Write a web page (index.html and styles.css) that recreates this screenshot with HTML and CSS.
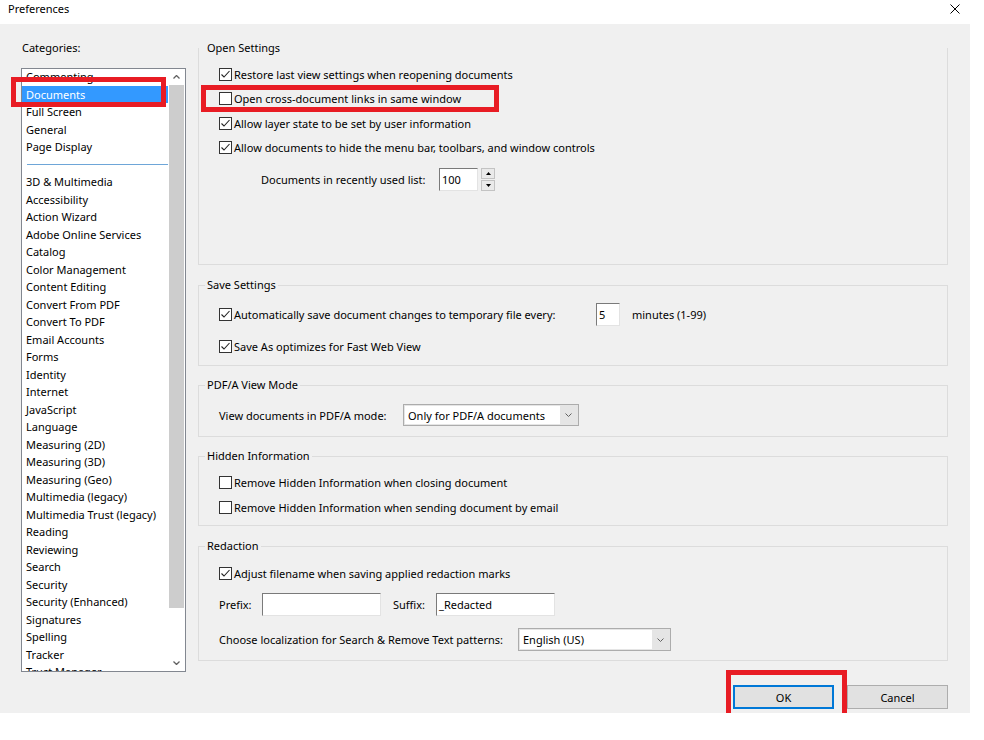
FILE: index.html
```html
<!DOCTYPE html>
<html lang="en">
<head>
    <meta charset="UTF-8">
    <title>Preferences</title>
    <link rel="stylesheet" href="styles.css">
</head>
<body>
<div class="window">
    <div class="titlebar">
        <span class="title">Preferences</span>
        <svg class="close" width="10" height="10" viewBox="0 0 10 10"><path d="M0.5 0.5 L9.5 9.5 M9.5 0.5 L0.5 9.5" stroke="#000" stroke-width="1"/></svg>
    </div>
    <div class="dialog">
        <div class="categories">
            <div class="cat-label">Categories:</div>
            <div class="listbox">
                <ul class="cat-list">
                    <li>Commenting</li>
                    <li class="selected">Documents</li>
                    <li>Full Screen</li>
                    <li>General</li>
                    <li>Page Display</li>
                    <li class="sep"></li>
                    <li>3D &amp; Multimedia</li>
                    <li>Accessibility</li>
                    <li>Action Wizard</li>
                    <li>Adobe Online Services</li>
                    <li>Catalog</li>
                    <li>Color Management</li>
                    <li>Content Editing</li>
                    <li>Convert From PDF</li>
                    <li>Convert To PDF</li>
                    <li>Email Accounts</li>
                    <li>Forms</li>
                    <li>Identity</li>
                    <li>Internet</li>
                    <li>JavaScript</li>
                    <li>Language</li>
                    <li>Measuring (2D)</li>
                    <li>Measuring (3D)</li>
                    <li>Measuring (Geo)</li>
                    <li>Multimedia (legacy)</li>
                    <li>Multimedia Trust (legacy)</li>
                    <li>Reading</li>
                    <li>Reviewing</li>
                    <li>Search</li>
                    <li>Security</li>
                    <li>Security (Enhanced)</li>
                    <li>Signatures</li>
                    <li>Spelling</li>
                    <li>Tracker</li>
                    <li>Trust Manager</li>
                </ul>
                <div class="scrollbar">
                    <div class="sb-btn"><svg width="7" height="4" viewBox="0 0 7 4"><polyline points="0.5,3.5 3.5,0.5 6.5,3.5" fill="none" stroke="#606060" stroke-width="1.3"/></svg></div>
                    <div class="sb-thumb"></div>
                    <div class="sb-track"></div>
                    <div class="sb-btn"><svg width="7" height="4" viewBox="0 0 7 4"><polyline points="0.5,0.5 3.5,3.5 6.5,0.5" fill="none" stroke="#606060" stroke-width="1.3"/></svg></div>
                </div>
            </div>
            <div class="annot annot-docs"></div>
        </div>

        <div class="panel">
            <fieldset class="group group-open">
                <legend>Open Settings</legend>
                <div class="opts opts-open">
                    <div class="check-row"><span class="cb"><svg width="11" height="11" viewBox="0 0 11 11"><polyline points="1.5,5.5 4,8 9.5,2" fill="none" stroke="#222" stroke-width="1.1"/></svg></span>Restore last view settings when reopening documents</div>
                    <div class="check-row marked"><span class="cb"></span>Open cross-document links in same window</div>
                    <div class="check-row"><span class="cb"><svg width="11" height="11" viewBox="0 0 11 11"><polyline points="1.5,5.5 4,8 9.5,2" fill="none" stroke="#222" stroke-width="1.1"/></svg></span>Allow layer state to be set by user information</div>
                    <div class="check-row"><span class="cb"><svg width="11" height="11" viewBox="0 0 11 11"><polyline points="1.5,5.5 4,8 9.5,2" fill="none" stroke="#222" stroke-width="1.1"/></svg></span>Allow documents to hide the menu bar, toolbars, and window controls</div>
                    <div class="spin-row">
                        <span class="spin-label">Documents in recently used list:</span>
                        <span class="field field-recent">100</span>
                        <span class="spin">
                            <span class="spin-btn"><svg width="5" height="3" viewBox="0 0 5 3"><polygon points="0,3 2.5,0 5,3" fill="#000"/></svg></span>
                            <span class="spin-btn"><svg width="5" height="3" viewBox="0 0 5 3"><polygon points="0,0 2.5,3 5,0" fill="#000"/></svg></span>
                        </span>
                    </div>
                </div>
            </fieldset>

            <fieldset class="group group-save">
                <legend>Save Settings</legend>
                <div class="opts opts-save">
                    <div class="check-row row-input"><span class="cb"><svg width="11" height="11" viewBox="0 0 11 11"><polyline points="1.5,5.5 4,8 9.5,2" fill="none" stroke="#222" stroke-width="1.1"/></svg></span><span class="auto-label">Automatically save document changes to temporary file every:</span><span class="field field-min">5</span><span class="unit">minutes (1-99)</span></div>
                    <div class="check-row row-gap"><span class="cb"><svg width="11" height="11" viewBox="0 0 11 11"><polyline points="1.5,5.5 4,8 9.5,2" fill="none" stroke="#222" stroke-width="1.1"/></svg></span>Save As optimizes for Fast Web View</div>
                </div>
            </fieldset>

            <fieldset class="group group-pdfa">
                <legend>PDF/A View Mode</legend>
                <div class="opts opts-pdfa">
                    <div class="field-row">
                        <span class="pdfa-label">View documents in PDF/A mode:</span>
                        <span class="select select-pdfa">
                            <span class="select-text">Only for PDF/A documents</span>
                            <span class="select-arrow"><svg width="7" height="4" viewBox="0 0 7 4"><polyline points="0.5,0.5 3.5,3.5 6.5,0.5" fill="none" stroke="#606060" stroke-width="1"/></svg></span>
                        </span>
                    </div>
                </div>
            </fieldset>

            <fieldset class="group group-hidden">
                <legend>Hidden Information</legend>
                <div class="opts opts-hidden">
                    <div class="check-row"><span class="cb"></span>Remove Hidden Information when closing document</div>
                    <div class="check-row"><span class="cb"></span>Remove Hidden Information when sending document by email</div>
                </div>
            </fieldset>

            <fieldset class="group group-redact">
                <legend>Redaction</legend>
                <div class="opts opts-redact">
                    <div class="check-row"><span class="cb"><svg width="11" height="11" viewBox="0 0 11 11"><polyline points="1.5,5.5 4,8 9.5,2" fill="none" stroke="#222" stroke-width="1.1"/></svg></span>Adjust filename when saving applied redaction marks</div>
                    <div class="field-row row-fix">
                        <span class="fix-label">Prefix:</span>
                        <span class="field field-fix"></span>
                        <span class="fix-label suffix-label">Suffix:</span>
                        <span class="field field-fix">_Redacted</span>
                    </div>
                    <div class="field-row row-loc">
                        <span class="loc-label">Choose localization for Search &amp; Remove Text patterns:</span>
                        <span class="select select-loc">
                            <span class="select-text">English (US)</span>
                            <span class="select-arrow"><svg width="7" height="4" viewBox="0 0 7 4"><polyline points="0.5,0.5 3.5,3.5 6.5,0.5" fill="none" stroke="#606060" stroke-width="1"/></svg></span>
                        </span>
                    </div>
                </div>
            </fieldset>

            <div class="buttons">
                <span class="ok-wrap"><button class="btn btn-ok">OK</button></span>
                <button class="btn">Cancel</button>
            </div>
        </div>
    </div>
</div>
</body>
</html>
```

FILE: styles.css
```css
body {
    margin: 0;
    background: #FFFFFF;
    font-family: 'Noto Sans', 'Segoe UI', sans-serif;
    font-size: 11px;
    color: #000000;
}

.window {
    width: 970px;
}

.titlebar {
    height: 24px;
    display: flex;
    justify-content: space-between;
    align-items: flex-start;
    padding: 0 10px 0 8px;
    box-sizing: border-box;
}

.title {
    line-height: 18px;
}

.close {
    margin-top: 4px;
}

.dialog {
    height: 689px;
    background: #F0F0F0;
    display: flex;
}

/* left column */
.categories {
    position: relative;
    width: 186px;
    padding-left: 21px;
    box-sizing: border-box;
    flex: none;
}

.cat-label {
    padding: 16px 0 0 1px;
    line-height: 16px;
    margin-bottom: 12px;
}

.listbox {
    height: 604px;
    border: 1px solid #828790;
    background: #FFFFFF;
    display: flex;
    box-sizing: border-box;
    overflow: hidden;
}

.cat-list {
    list-style: none;
    margin: -1px 0 0 0;
    padding: 0;
    flex: 1;
    min-width: 0;
}

.cat-list li {
    height: 17.5px;
    line-height: 17.5px;
    padding-left: 4px;
    white-space: nowrap;
}

.cat-list li.selected {
    background: #3399FF;
    color: #FFFFFF;
}

.cat-list li.sep {
    display: flex;
    align-items: center;
}

.cat-list li.sep::before {
    content: '';
    flex: 1;
    height: 1px;
    margin-left: 1px;
    background: #6EA6D8;
}

.scrollbar {
    width: 17px;
    flex: none;
    display: flex;
    flex-direction: column;
    background: #FFFFFF;
}

.sb-btn {
    height: 16px;
    display: flex;
    align-items: center;
    justify-content: center;
}

.sb-thumb {
    height: 523px;
    margin: 0 1px;
    background: #CDCDCD;
}

.sb-track {
    flex: 1;
}

.annot {
    position: absolute;
    box-sizing: border-box;
    border: 5px solid #E81C24;
}

.annot-docs {
    left: 11px;
    top: 53px;
    width: 155px;
    height: 30px;
}

/* right column */
.panel {
    width: 750px;
    margin-left: 12px;
    padding-top: 16px;
}

.group {
    margin: 0;
    padding: 0 0 0 6px;
    border: 1px solid #DCDCDC;
    box-sizing: border-box;
    min-width: 0;
}

.group legend {
    padding: 0 2px;
    line-height: 16px;
}

.group-open {
    height: 225px;
    border-top: none;
}

.group-save {
    height: 89px;
    margin-top: 12px;
}

.group-pdfa {
    height: 60px;
    margin-top: 11px;
}

.group-hidden {
    height: 78px;
    margin-top: 11px;
}

.group-redact {
    height: 123px;
    margin-top: 12px;
}

.opts {
    margin-left: 14px;
    white-space: nowrap;
}

.opts-open { padding-top: 6px; }
.opts-save { padding-top: 10px; }
.opts-pdfa { padding-top: 11px; }
.opts-hidden { padding-top: 6px; }
.opts-redact { padding-top: 7px; }

.check-row {
    display: flex;
    align-items: center;
    height: 24.5px;
}

.opts-hidden .check-row {
    height: 25px;
}

.opts-redact .check-row {
    height: 24px;
}

.check-row.marked {
    position: relative;
}

.check-row.marked::after {
    content: '';
    position: absolute;
    left: -18px;
    top: -2px;
    width: 298px;
    height: 27px;
    box-sizing: border-box;
    border: 5px solid #E81C24;
}

.cb {
    width: 13px;
    height: 13px;
    box-sizing: border-box;
    border: 1px solid #333333;
    background: #FFFFFF;
    margin-right: 2px;
    flex: none;
    display: flex;
    align-items: center;
    justify-content: center;
}

.row-input {
    height: 23px;
}

.row-gap {
    margin-top: 8px;
}

.auto-label {
    width: 362px;
}

.unit {
    margin-left: 12px;
}

.field {
    height: 23px;
    box-sizing: border-box;
    border: 1px solid;
    border-color: #7A7A7A #E3E3E3 #E3E3E3 #7A7A7A;
    background: #FFFFFF;
    padding-left: 2px;
    line-height: 21px;
    flex: none;
}

.field-recent { width: 39px; }
.field-min { width: 24px; }
.field-fix { width: 119px; }

.spin-row {
    display: flex;
    align-items: center;
    margin-top: 8px;
    padding-left: 42px;
}

.spin-label {
    width: 178px;
}

.spin {
    margin-left: 3px;
    display: flex;
    flex-direction: column;
    gap: 1px;
}

.spin-btn {
    width: 14px;
    height: 11px;
    box-sizing: border-box;
    border: 1px solid #C3C3C3;
    background: #EAEAEA;
    display: flex;
    align-items: center;
    justify-content: center;
}

.field-row {
    display: flex;
    align-items: center;
}

.pdfa-label { width: 184px; }
.loc-label { width: 299px; }

.fix-label { width: 43px; }
.suffix-label { margin-left: 12px; }

.row-fix { margin-top: 8px; }
.row-loc { margin-top: 12px; }

.select {
    display: flex;
    box-sizing: border-box;
    border: 1px solid #ACACAC;
    background: #E5E5E5;
    padding: 1px;
}

.select-pdfa {
    width: 176px;
    height: 22px;
}

.select-loc {
    width: 153px;
    height: 23px;
}

.select-text {
    flex: 1;
    background: #FFFFFF;
    padding-left: 3px;
    display: flex;
    align-items: center;
}

.select-arrow {
    width: 17px;
    display: flex;
    align-items: center;
    justify-content: center;
}

.buttons {
    display: flex;
    justify-content: flex-end;
    gap: 13px;
    margin-top: 24px;
}

.ok-wrap {
    position: relative;
    display: flex;
}

.ok-wrap::after {
    content: '';
    position: absolute;
    left: -7px;
    top: -15px;
    right: -13px;
    bottom: -10px;
    border: 5px solid #E81C24;
}

.btn {
    width: 101px;
    height: 24px;
    box-sizing: border-box;
    border: 1px solid #ADADAD;
    background: #E1E1E1;
    font-family: 'Noto Sans', 'Segoe UI', sans-serif;
    font-size: 11px;
    color: #000000;
    padding: 0;
}

.btn-ok {
    border: 2px solid #0078D7;
}
```
